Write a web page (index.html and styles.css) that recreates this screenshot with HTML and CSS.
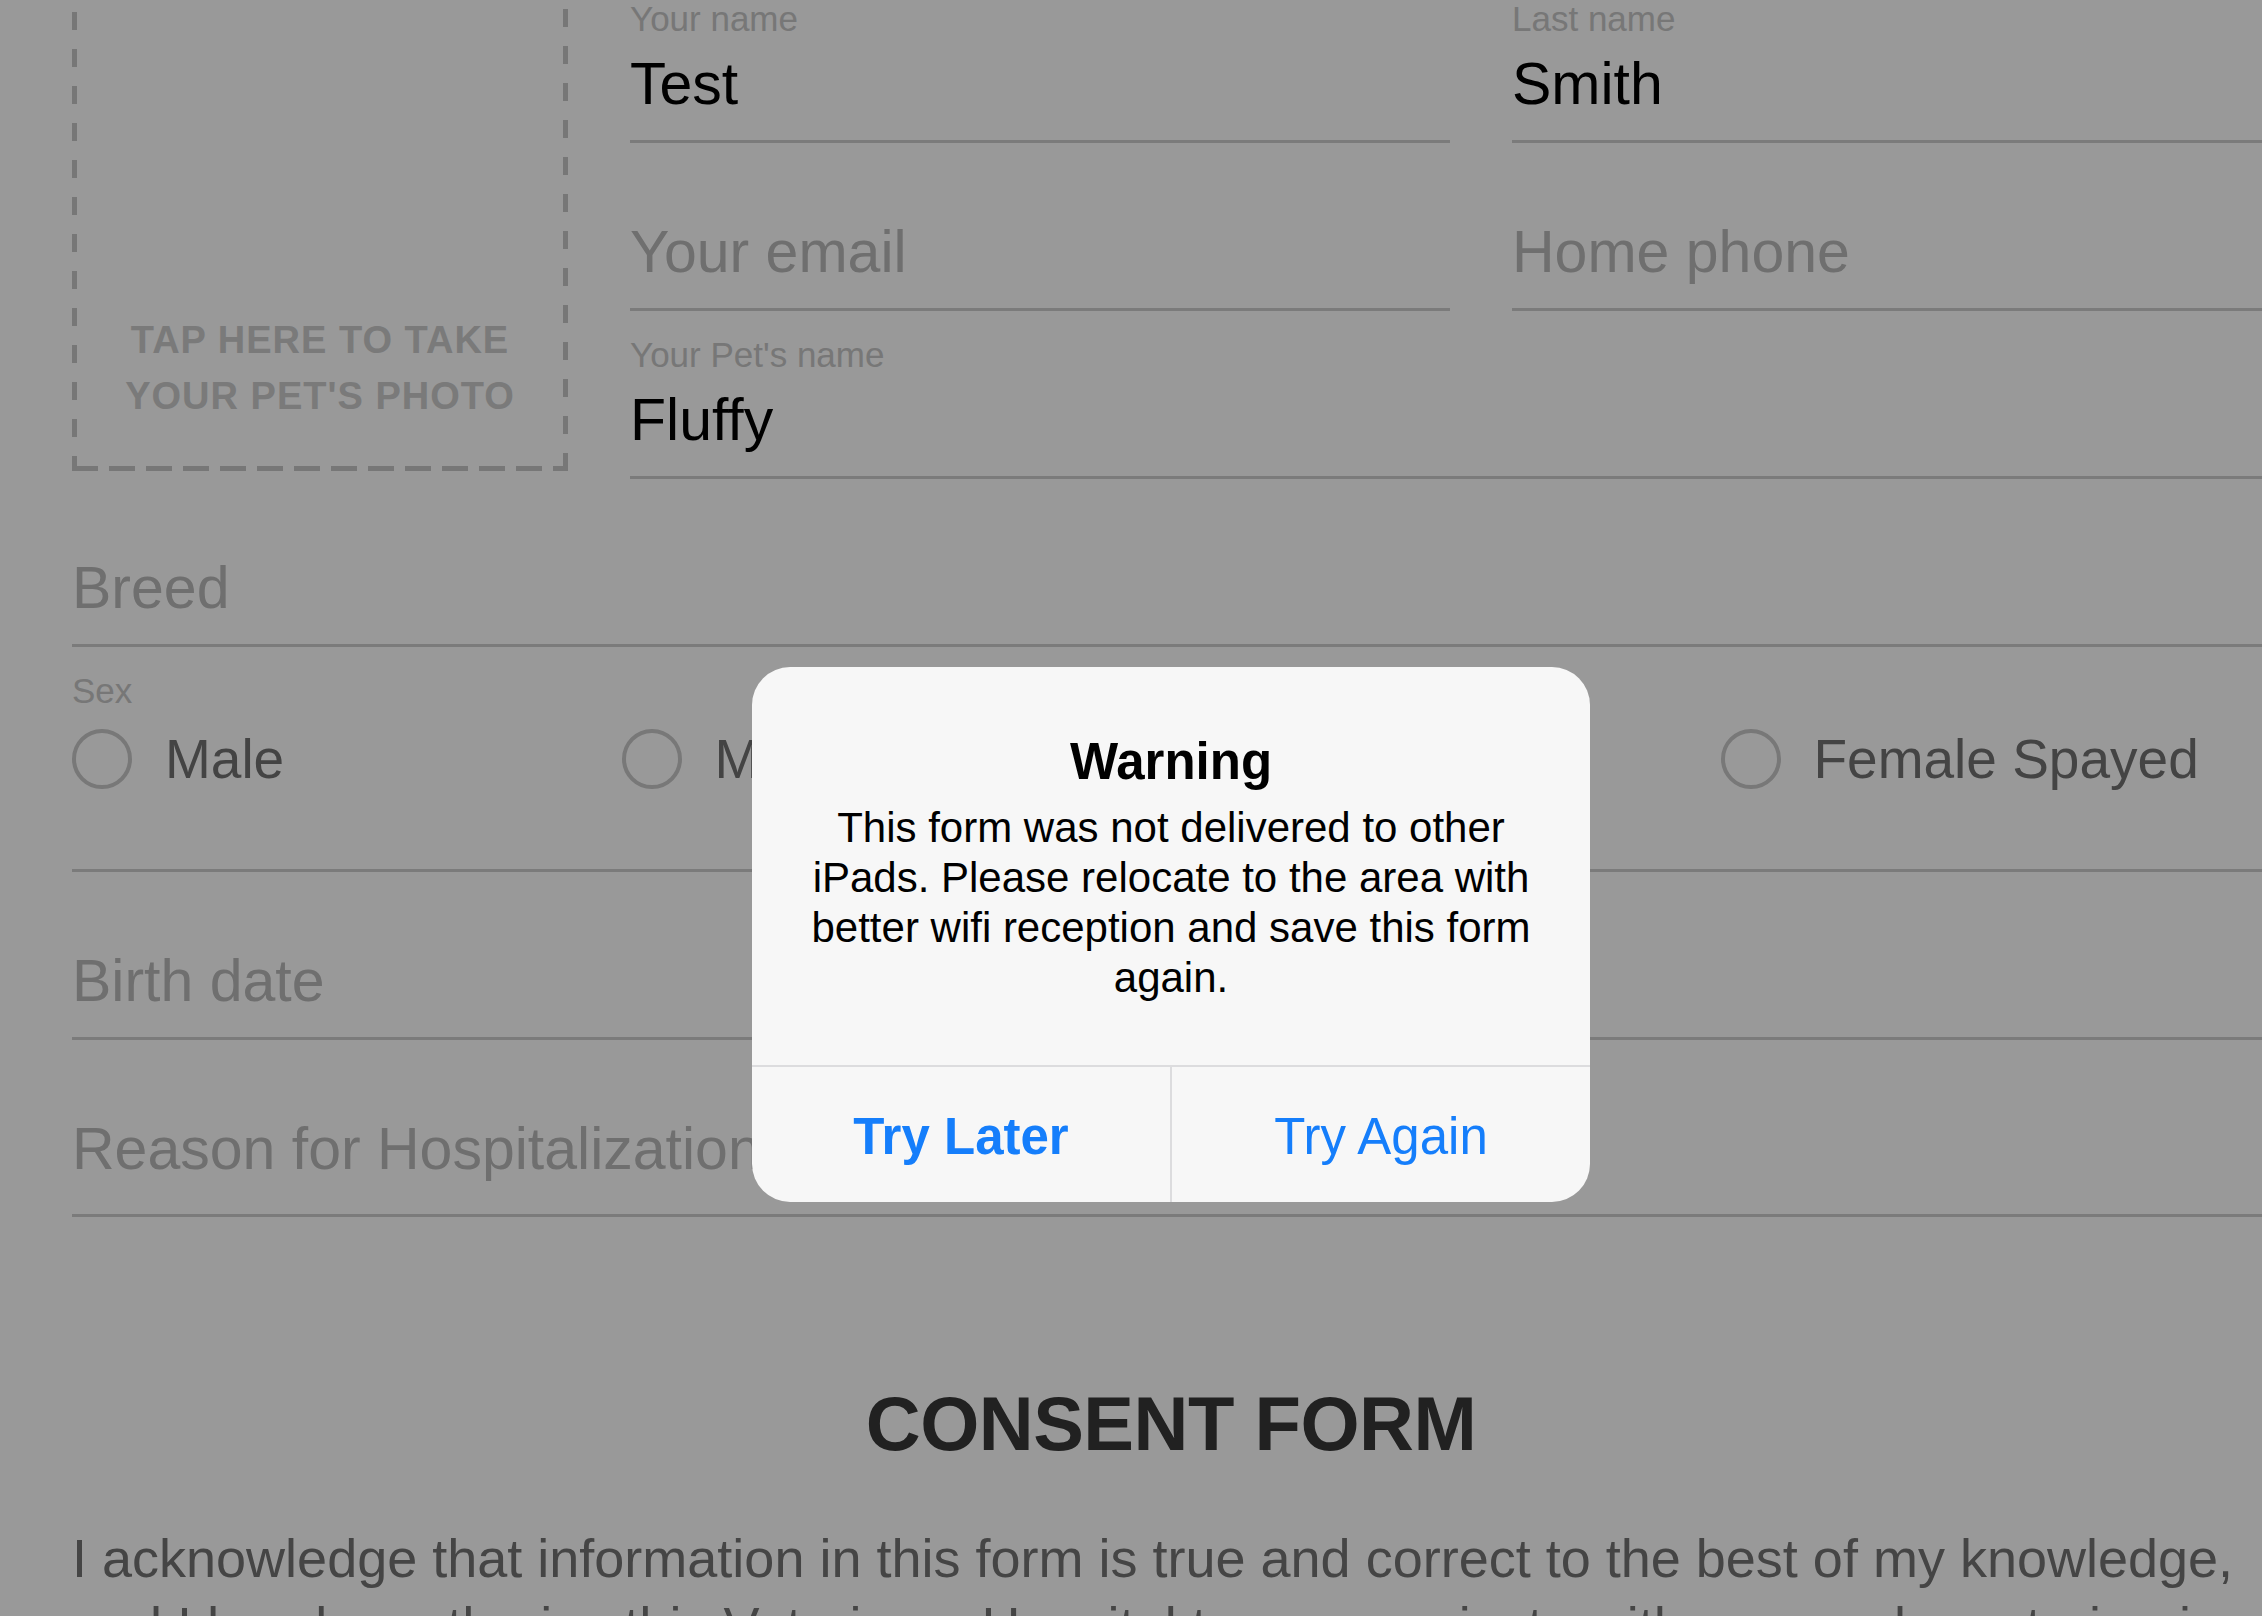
FILE: index.html
```html
<!DOCTYPE html>
<html lang="en">
<head>
  <meta charset="UTF-8" />
  <meta name="viewport" content="width=device-width, initial-scale=1.0" />
  <title>Hospitalization Form</title>
  <link rel="stylesheet" href="styles.css">
</head>

<body>
  <div class="screen">
    <!-- form (scrolled a little) -->
    <div class="form">
      <div class="top">
        <div class="photo">
          <span>TAP HERE TO TAKE<br>YOUR PET'S PHOTO</span>
        </div>

        <div class="top-fields">
          <div class="field">
            <div class="field-label">Your name</div>
            <div class="field-value">Test</div>
          </div>
          <div class="field">
            <div class="field-label">Last name</div>
            <div class="field-value">Smith</div>
          </div>
          <div class="field">
            <div class="field-label"></div>
            <div class="field-value empty">Your email</div>
          </div>
          <div class="field">
            <div class="field-label"></div>
            <div class="field-value empty">Home phone</div>
          </div>
          <div class="field wide">
            <div class="field-label">Your Pet's name</div>
            <div class="field-value">Fluffy</div>
          </div>
        </div>
      </div>

      <div class="field">
        <div class="field-label"></div>
        <div class="field-value empty">Breed</div>
      </div>

      <div class="field">
        <div class="field-label">Sex</div>
        <div class="radios">
          <div class="radio"><span class="radio-circle"></span>Male</div>
          <div class="radio"><span class="radio-circle"></span>Male Neutered</div>
          <div class="radio"><span class="radio-circle"></span>Female</div>
          <div class="radio"><span class="radio-circle"></span>Female Spayed</div>
        </div>
      </div>

      <div class="field">
        <div class="field-label"></div>
        <div class="field-value empty">Birth date</div>
      </div>

      <div class="field tall">
        <div class="field-label"></div>
        <div class="field-value empty">Reason for Hospitalization</div>
      </div>

      <h2 class="consent-title">CONSENT FORM</h2>
      <p class="consent-text">
        I acknowledge that information in this form is true and correct to the best of my knowledge,
        and I hereby authorize this Veterinary Hospital to communicate with my regular veterinarian
        regarding the treatment of my pet.
      </p>
    </div>

    <!-- alert -->
    <div class="backdrop"></div>
    <div class="alert">
      <div class="alert-body">
        <div class="alert-title">Warning</div>
        <div class="alert-message">This form was not delivered to other iPads. Please relocate to the area with better wifi reception and save this form again.</div>
      </div>
      <div class="alert-actions">
        <button class="alert-btn bold">Try Later</button>
        <button class="alert-btn">Try Again</button>
      </div>
    </div>
  </div>
</body>
</html>
```

FILE: styles.css
```css
html, body {
  margin: 0;
  overflow: hidden;
}

body {
  background: #fff;
  font-family: "Liberation Sans", Arial, sans-serif;
}

.screen {
  position: relative;
  width: 2342px;
  height: 1616px;
  overflow: hidden;
}

.form {
  padding: 0 72px;
  margin-top: -25px;
}

/* photo + name fields */
.top {
  display: flex;
  align-items: flex-start;
  gap: 62px;
}

/* long dashes, drawn with gradients so the dash length can be set */
.photo {
  flex: 0 0 496px;
  height: 496px;
  box-sizing: border-box;
  background:
    repeating-linear-gradient(90deg, #c6c6c6 0 26px, transparent 26px 37px) left top / 100% 5px no-repeat,
    repeating-linear-gradient(90deg, #c6c6c6 0 26px, transparent 26px 37px) left bottom / 100% 5px no-repeat,
    repeating-linear-gradient(180deg, #c6c6c6 0 18px, transparent 18px 37px) left top / 5px 100% no-repeat,
    repeating-linear-gradient(0deg, #c6c6c6 0 18px, transparent 18px 37px) right bottom / 5px 100% no-repeat;
  display: flex;
  align-items: flex-end;
  justify-content: center;
  padding-bottom: 47px;
  text-align: center;
  font-size: 38px;
  font-weight: bold;
  letter-spacing: 1px;
  line-height: 56px;
  color: #cbcbcb;
}

.top-fields {
  flex: 1;
  display: grid;
  grid-template-columns: 820px 1fr;
  column-gap: 62px;
}

.field {
  padding: 24px 0 22px;
  border-bottom: 3px solid #cdcdcd;
}

.field.wide {
  grid-column: 1 / -1;
}

.field.tall {
  padding-bottom: 31px;
}

.field-label {
  height: 40px;
  font-size: 35px;
  line-height: 40px;
  color: #c6c6c6;
}

.field-value {
  margin-top: 11px;
  font-size: 59px;
  line-height: 68px;
  color: #000;
}

.field-value.empty {
  color: #b9b9b9;
}

/* sex radios */
.radios {
  display: grid;
  grid-template-columns: repeat(4, 1fr);
  margin: 17px 0 57px;
}

.radio {
  display: flex;
  align-items: center;
  gap: 33px;
  font-size: 55px;
  line-height: 62px;
  color: #727272;
}

.radio-circle {
  flex: none;
  width: 60px;
  height: 60px;
  box-sizing: border-box;
  border: 4px solid #c8c8c8;
  border-radius: 50%;
}

/* consent */
.consent-title {
  margin: 161px 0 0;
  text-align: center;
  font-size: 76px;
  line-height: 91px;
  letter-spacing: -0.5px;
  color: #383838;
}

.consent-text {
  margin: 55px 0 0;
  font-size: 54px;
  line-height: 68px;
  color: #737373;
}

/* alert */
.backdrop {
  position: absolute;
  inset: 0;
  background: rgba(0, 0, 0, 0.4);
}

.alert {
  position: absolute;
  left: 752px;
  top: 667px;
  width: 838px;
  background: #f7f7f7;
  border-radius: 38px;
  overflow: hidden;
  text-align: center;
  color: #000;
}

.alert-body {
  padding: 64px 34px 62px;
}

.alert-title {
  font-size: 51px;
  font-weight: bold;
  line-height: 61px;
}

.alert-message {
  margin-top: 11px;
  font-size: 42px;
  line-height: 50px;
}

.alert-actions {
  display: flex;
  border-top: 2px solid #dcdcde;
}

.alert-btn {
  flex: 1;
  height: 135px;
  box-sizing: border-box;
  padding: 5px 0 0;
  border: 0;
  background: none;
  font-family: inherit;
  font-size: 51px;
  line-height: 122px;
  color: #157efb;
}

.alert-btn + .alert-btn {
  border-left: 2px solid #dcdcde;
}

.alert-btn.bold {
  font-weight: bold;
}
```
